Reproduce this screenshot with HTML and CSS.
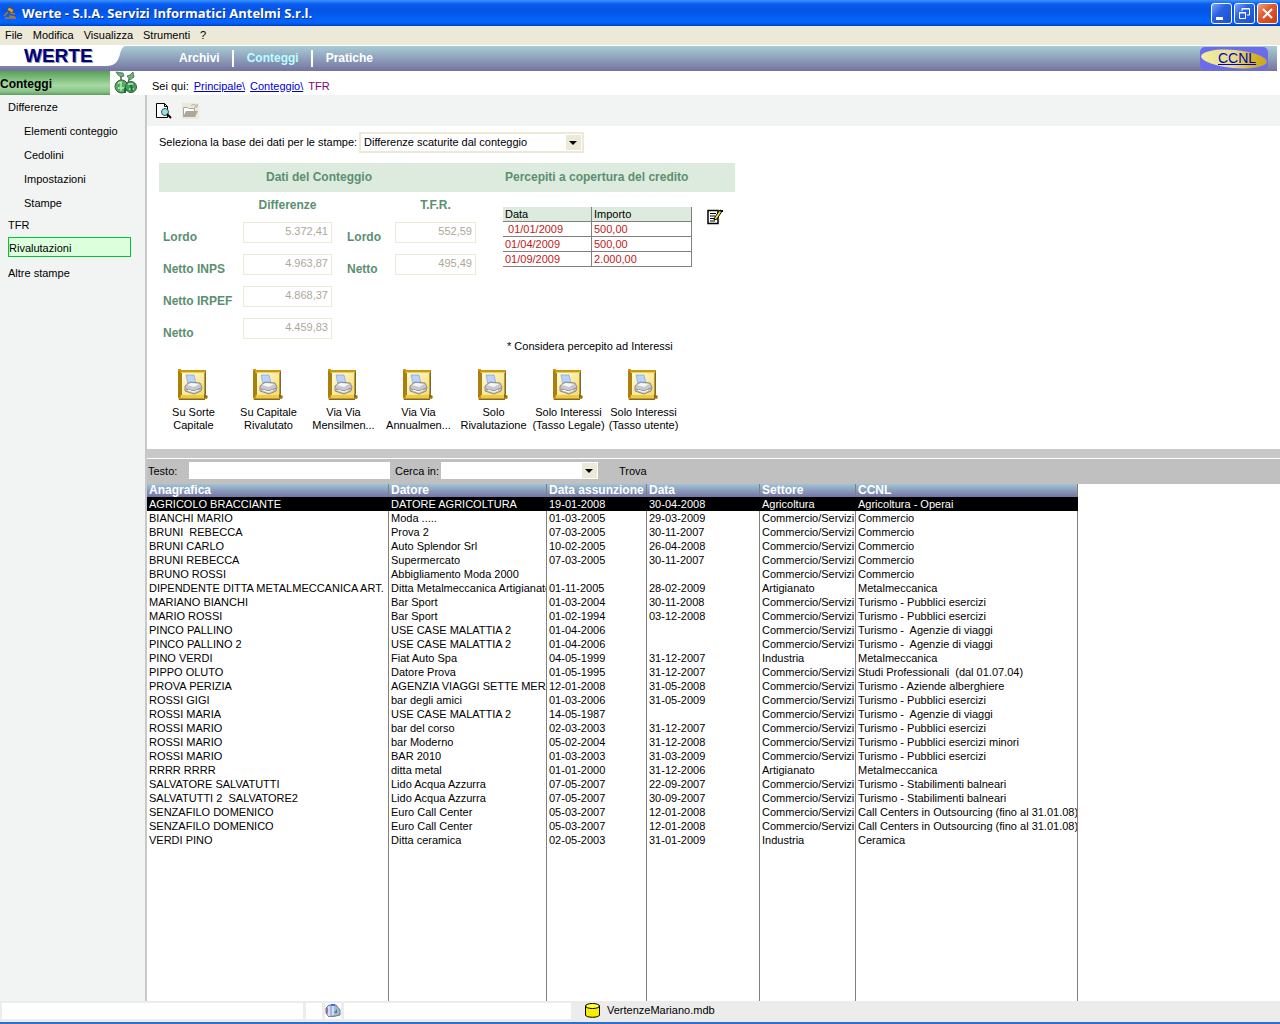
FILE: index.html
```html
<!DOCTYPE html>
<html lang="it">

<head>
  <meta charset="UTF-8">
  <title>Werte - S.I.A. Servizi Informatici Antelmi S.r.l.</title>
  <link rel="stylesheet" href="styles.css">
</head>

<body>
  <svg class="defs" width="0" height="0" aria-hidden="true">
    <linearGradient id="gold" x1="0" y1="0" x2="1" y2="1">
      <stop offset="0" stop-color="#fffbe0" />
      <stop offset="1" stop-color="#f3dc6c" />
    </linearGradient>
    <symbol id="book" viewBox="0 0 31 32">
      <path d="M1 1h27v27h2l-1 2H3l-2-2z" fill="#b98a0e" />
      <path d="M0 0h3v1h24v30H1L0 29z" fill="#c89a14" />
      <path d="M4 4h22v22H4z" fill="url(#gold)" />
      <path d="M1 2v26M3 4v22" stroke="#8d6508" />
      <path d="M3 3.500h24" stroke="#f0cf50" />
      <path d="M27.500 3v22" stroke="#6f6a4c" />
      <path d="M3 26h26l1 1-3 2H3z" fill="#f1c93a" />
      <path d="M26 25l4 2.500-4 2z" fill="#7c6a35" />
      <path d="M1 30.500h26" stroke="#76694a" />
      <path d="M8 6h8l2 9h-8z" fill="#b9d3fb" stroke="#7fa0dc" stroke-width=".7" />
      <path d="M7 17l5-4 10 1 2 4-1 4-7 3-9-3z" fill="#c9c9cd" stroke="#77777d" stroke-width=".8" />
      <path d="M9 16l4-2 8 1-5 3z" fill="#f6f6f8" />
      <path d="M8 20l8 2 7-3" stroke="#8a8a90" fill="none" />
      <path d="M10 21l6 2 4-2" stroke="#fff" fill="none" />
    </symbol>
  </svg>

  <div class="window">
    <header class="title-bar">
      <svg class="app-icon" viewBox="0 0 14 14" width="14" height="14">
        <path d="M6 1l5 3-2 3-5-3z" fill="#d9a33c" stroke="#5a3c10" stroke-width=".7" />
        <path d="M5 6L1 10M7 7l5 1M6 10l6 1M2 12h11" stroke="#b07a28" stroke-width="1.500" />
      </svg>
      <h1>Werte - S.I.A. Servizi Informatici Antelmi S.r.l.</h1>
      <div class="window-buttons">
        <button type="button" aria-label="Riduci a icona">
          <svg viewBox="0 0 21 21"><path d="M5 14h7v3H5z" fill="#fff" /></svg>
        </button>
        <button type="button" aria-label="Ripristina">
          <svg viewBox="0 0 21 21" fill="none" stroke="#fff"><path d="M8 8V5.500h7.500V12H13M8 6h8" /><path d="M5.500 9.500h6v6h-6zM5 10h7" /></svg>
        </button>
        <button type="button" class="close" aria-label="Chiudi">
          <svg viewBox="0 0 21 21"><path d="M6 6l9 9M15 6l-9 9" stroke="#fff" stroke-width="2" /></svg>
        </button>
      </div>
    </header>

    <div class="menu-bar">
      <button type="button">File</button>
      <button type="button">Modifica</button>
      <button type="button">Visualizza</button>
      <button type="button">Strumenti</button>
      <button type="button">?</button>
    </div>

    <nav class="top-nav">
      <svg class="logo-shape" viewBox="0 0 126 20" width="126" height="20">
        <path d="M0 0h125c-3 1-4 4-5 8-2 8-5 12-14 12H0z" fill="#fff" />
      </svg>
      <span class="logo">WERTE</span>
      <div class="sections">
        <a href="#">Archivi</a>
        <a href="#" class="current">Conteggi</a>
        <a href="#">Pratiche</a>
      </div>
      <a href="#" class="ccnl">
        <svg viewBox="0 0 68 23" width="68" height="23">
          <linearGradient id="oval" x1="0" x2="1">
            <stop offset="0" stop-color="#f4eda0" />
            <stop offset=".5" stop-color="#e6dc90" />
            <stop offset=".75" stop-color="#d4b832" />
            <stop offset="1" stop-color="#c9a51c" />
          </linearGradient>
          <rect width="68" height="23" rx="5" fill="#6a6cec" />
          <ellipse cx="34" cy="12" rx="33" ry="9" transform="rotate(5 34 12)" fill="url(#oval)" />
        </svg>
        <span>CCNL</span>
      </a>
    </nav>

    <div class="body">
      <aside class="sidebar">
        <div class="sidebar-head">
          <h2>Conteggi</h2>
          <svg viewBox="0 0 24 24" width="24" height="24">
            <path d="M7 9V4M14 12l2-6 4-1" stroke="#4d6b50" stroke-width="1.500" fill="none" />
            <path d="M2 1l7 1 1 3-3 1-3-2zM13 5l3-1 3-3 1 5-4 3z" fill="#69b577" stroke="#4d6b50" stroke-width=".8" />
            <circle cx="7.500" cy="15.500" r="6.500" fill="#4fae62" stroke="#3d5c42" />
            <circle cx="17" cy="16" r="5.500" fill="#43a25a" stroke="#3d5c42" />
            <path d="M4 12l4-1M4 17h6M7 12v8M14 13h5M15 18h5" stroke="#b8e8bd" stroke-width="1.500" />
            <path d="M11 17v5M17 14l1 6" stroke="#1c6e33" stroke-width="2" />
          </svg>
        </div>
        <ul class="tree">
          <li><a href="#">Differenze</a></li>
          <li class="sub"><a href="#">Elementi conteggio</a></li>
          <li class="sub"><a href="#">Cedolini</a></li>
          <li class="sub"><a href="#">Impostazioni</a></li>
          <li class="sub"><a href="#">Stampe</a></li>
          <li class="tfr"><a href="#">TFR</a></li>
          <li class="selected"><a href="#">Rivalutazioni</a></li>
          <li><a href="#">Altre stampe</a></li>
        </ul>
      </aside>

      <main>
        <div class="breadcrumb">
          <span>Sei qui:</span>
          <a href="#">Principale\</a>
          <a href="#">Conteggio\</a>
          <span class="here">TFR</span>
        </div>

        <div class="panel">
          <div class="toolbar">
            <button type="button" aria-label="Anteprima">
              <svg viewBox="0 0 17 16" width="17" height="16">
                <path d="M1.500.5h8l3 3V14.500h-11z" fill="#fff" stroke="#000" />
                <path d="M9.500.5v3h3" fill="none" stroke="#000" />
                <circle cx="10" cy="9" r="3.500" fill="#8fe3ea" stroke="#3b4a4d" />
                <path d="M12 11l4 4" stroke="#000" stroke-width="2" />
              </svg>
            </button>
            <button type="button" aria-label="Apri" disabled>
              <svg viewBox="0 0 17 16" width="17" height="16">
                <path d="M0 0h17v16H0z" fill="#ece9d8" />
                <path d="M1.500 13.500v-9h4l1 1h6v3" fill="#fff" stroke="#aca899" />
                <path d="M1 14l3-6h12l-3 6z" fill="#aca899" />
                <path d="M9 3c2-2 4-2 5 0M15 1v3h-3" fill="none" stroke="#aca899" />
              </svg>
            </button>
          </div>

          <section class="report">
            <div class="base-select">
              <label for="base">Seleziona la base dei dati per le stampe:</label>
              <div class="combo bordered">
                <select id="base">
                  <option>Differenze scaturite dal conteggio</option>
                </select>
              </div>
            </div>

            <div class="band">
              <h3 class="calc-title">Dati del Conteggio</h3>
              <h3>Percepiti a copertura del credito</h3>
            </div>

            <div class="figures">
              <div class="calc">
                <h4 class="diff-head">Differenze</h4>
                <h4 class="tfr-head">T.F.R.</h4>
                <label for="d1">Lordo</label>
                <input id="d1" value="5.372,41" disabled>
                <label for="t1" class="tfr-label">Lordo</label>
                <input id="t1" value="552,59" disabled>
                <label for="d2">Netto INPS</label>
                <input id="d2" value="4.963,87" disabled>
                <label for="t2" class="tfr-label">Netto</label>
                <input id="t2" value="495,49" disabled>
                <label for="d3" class="first">Netto IRPEF</label>
                <input id="d3" value="4.868,37" disabled>
                <label for="d4" class="first">Netto</label>
                <input id="d4" value="4.459,83" disabled>
              </div>

              <div class="received">
                <table>
                  <thead>
                    <tr><th>Data</th><th>Importo</th></tr>
                  </thead>
                  <tbody>
                    <tr><td> 01/01/2009</td><td>500,00</td></tr>
                    <tr><td>01/04/2009</td><td>500,00</td></tr>
                    <tr><td>01/09/2009</td><td>2.000,00</td></tr>
                  </tbody>
                </table>
                <p>* Considera percepito ad Interessi</p>
              </div>

              <button type="button" class="edit" aria-label="Modifica percepiti">
                <svg viewBox="0 0 16 16" width="16" height="16">
                  <path d="M1 1.500h10v13H1z" fill="#fff" stroke="#000" stroke-width="1.500" />
                  <path d="M3 4.500h6M3 7h5M3 9.500h4M3 12h5" stroke="#000" />
                  <path d="M7 11l1-3 5-7 2 1-5 8z" fill="#f5e63c" stroke="#000" />
                  <path d="M12 1h4v2h-2z" />
                </svg>
              </button>
            </div>

            <div class="prints">
              <button type="button"><svg><use href="#book" /></svg>Su Sorte<br>Capitale</button>
              <button type="button"><svg><use href="#book" /></svg>Su Capitale<br>Rivalutato</button>
              <button type="button"><svg><use href="#book" /></svg>Via Via<br>Mensilmen...</button>
              <button type="button"><svg><use href="#book" /></svg>Via Via<br>Annualmen...</button>
              <button type="button"><svg><use href="#book" /></svg>Solo<br>Rivalutazione</button>
              <button type="button"><svg><use href="#book" /></svg>Solo Interessi<br>(Tasso Legale)</button>
              <button type="button"><svg><use href="#book" /></svg>Solo Interessi<br>(Tasso utente)</button>
            </div>
          </section>

          <div class="splitter"></div>

          <form class="search">
            <label for="testo">Testo:</label>
            <input type="text" id="testo">
            <label for="cerca">Cerca in:</label>
            <div class="combo">
              <select id="cerca">
                <option></option>
              </select>
            </div>
            <button type="button">Trova</button>
          </form>

          <div class="records">
            <table>
              <colgroup>
                <col class="c-anagrafica">
                <col class="c-datore">
                <col class="c-assunzione">
                <col class="c-data">
                <col class="c-settore">
                <col class="c-ccnl">
              </colgroup>
              <thead>
                <tr><th>Anagrafica</th><th>Datore</th><th>Data assunzione</th><th>Data</th><th>Settore</th><th>CCNL</th></tr>
              </thead>
              <tbody>
                <tr class="active"><td>AGRICOLO BRACCIANTE</td><td>DATORE AGRICOLTURA</td><td>19-01-2008</td><td>30-04-2008</td><td>Agricoltura</td><td>Agricoltura - Operai</td></tr>
                <tr><td>BIANCHI MARIO</td><td>Moda .....</td><td>01-03-2005</td><td>29-03-2009</td><td>Commercio/Servizi</td><td>Commercio</td></tr>
                <tr><td>BRUNI  REBECCA</td><td>Prova 2</td><td>07-03-2005</td><td>30-11-2007</td><td>Commercio/Servizi</td><td>Commercio</td></tr>
                <tr><td>BRUNI CARLO</td><td>Auto Splendor Srl</td><td>10-02-2005</td><td>26-04-2008</td><td>Commercio/Servizi</td><td>Commercio</td></tr>
                <tr><td>BRUNI REBECCA</td><td>Supermercato</td><td>07-03-2005</td><td>30-11-2007</td><td>Commercio/Servizi</td><td>Commercio</td></tr>
                <tr><td>BRUNO ROSSI</td><td>Abbigliamento Moda 2000</td><td></td><td></td><td>Commercio/Servizi</td><td>Commercio</td></tr>
                <tr><td>DIPENDENTE DITTA METALMECCANICA ART.</td><td>Ditta Metalmeccanica Artigianato</td><td>01-11-2005</td><td>28-02-2009</td><td>Artigianato</td><td>Metalmeccanica</td></tr>
                <tr><td>MARIANO BIANCHI</td><td>Bar Sport</td><td>01-03-2004</td><td>30-11-2008</td><td>Commercio/Servizi</td><td>Turismo - Pubblici esercizi</td></tr>
                <tr><td>MARIO ROSSI</td><td>Bar Sport</td><td>01-02-1994</td><td>03-12-2008</td><td>Commercio/Servizi</td><td>Turismo - Pubblici esercizi</td></tr>
                <tr><td>PINCO PALLINO</td><td>USE CASE MALATTIA 2</td><td>01-04-2006</td><td></td><td>Commercio/Servizi</td><td>Turismo -  Agenzie di viaggi</td></tr>
                <tr><td>PINCO PALLINO 2</td><td>USE CASE MALATTIA 2</td><td>01-04-2006</td><td></td><td>Commercio/Servizi</td><td>Turismo -  Agenzie di viaggi</td></tr>
                <tr><td>PINO VERDI</td><td>Fiat Auto Spa</td><td>04-05-1999</td><td>31-12-2007</td><td>Industria</td><td>Metalmeccanica</td></tr>
                <tr><td>PIPPO OLUTO</td><td>Datore Prova</td><td>01-05-1995</td><td>31-12-2007</td><td>Commercio/Servizi</td><td>Studi Professionali  (dal 01.07.04)</td></tr>
                <tr><td>PROVA PERIZIA</td><td>AGENZIA VIAGGI SETTE MERA</td><td>12-01-2008</td><td>31-05-2008</td><td>Commercio/Servizi</td><td>Turismo - Aziende alberghiere</td></tr>
                <tr><td>ROSSI GIGI</td><td>bar degli amici</td><td>01-03-2006</td><td>31-05-2009</td><td>Commercio/Servizi</td><td>Turismo - Pubblici esercizi</td></tr>
                <tr><td>ROSSI MARIA</td><td>USE CASE MALATTIA 2</td><td>14-05-1987</td><td></td><td>Commercio/Servizi</td><td>Turismo -  Agenzie di viaggi</td></tr>
                <tr><td>ROSSI MARIO</td><td>bar del corso</td><td>02-03-2003</td><td>31-12-2007</td><td>Commercio/Servizi</td><td>Turismo - Pubblici esercizi</td></tr>
                <tr><td>ROSSI MARIO</td><td>bar Moderno</td><td>05-02-2004</td><td>31-12-2008</td><td>Commercio/Servizi</td><td>Turismo - Pubblici esercizi minori</td></tr>
                <tr><td>ROSSI MARIO</td><td>BAR 2010</td><td>01-03-2003</td><td>31-03-2009</td><td>Commercio/Servizi</td><td>Turismo - Pubblici esercizi</td></tr>
                <tr><td>RRRR RRRR</td><td>ditta metal</td><td>01-01-2000</td><td>31-12-2006</td><td>Artigianato</td><td>Metalmeccanica</td></tr>
                <tr><td>SALVATORE SALVATUTTI</td><td>Lido Acqua Azzurra</td><td>07-05-2007</td><td>22-09-2007</td><td>Commercio/Servizi</td><td>Turismo - Stabilimenti balneari</td></tr>
                <tr><td>SALVATUTTI 2  SALVATORE2</td><td>Lido Acqua Azzurra</td><td>07-05-2007</td><td>30-09-2007</td><td>Commercio/Servizi</td><td>Turismo - Stabilimenti balneari</td></tr>
                <tr><td>SENZAFILO DOMENICO</td><td>Euro Call Center</td><td>05-03-2007</td><td>12-01-2008</td><td>Commercio/Servizi</td><td>Call Centers in Outsourcing (fino al 31.01.08)</td></tr>
                <tr><td>SENZAFILO DOMENICO</td><td>Euro Call Center</td><td>05-03-2007</td><td>12-01-2008</td><td>Commercio/Servizi</td><td>Call Centers in Outsourcing (fino al 31.01.08)</td></tr>
                <tr><td>VERDI PINO</td><td>Ditta ceramica</td><td>02-05-2003</td><td>31-01-2009</td><td>Industria</td><td>Ceramica</td></tr>
                <tr class="filler"><td></td><td></td><td></td><td></td><td></td><td></td></tr>
              </tbody>
            </table>
          </div>
        </div>
      </main>
    </div>

    <footer class="status-bar">
      <div class="cell wide"></div>
      <div class="cell small"></div>
      <div class="cell small">
        <svg viewBox="0 0 16 13" width="16" height="13">
          <path d="M4 1h7l4 5v5l-4 1-7 1-3-4V4z" fill="#a9b4dc" stroke="#6f7693" />
          <path d="M4 2v10M8 2v9" stroke="#dfe6ff" stroke-width="1.500" />
          <path d="M2 4v5" stroke="#a33a5c" />
          <path d="M6 1h4" stroke="#2f78e0" stroke-width="2" />
          <path d="M9 9l3-4v4z" fill="#2f9c3c" />
        </svg>
      </div>
      <div class="cell medium"></div>
      <div class="database">
        <svg viewBox="0 0 15 15" width="15" height="15">
          <path d="M.5 3v9c0 3 14 3 14 0V3z" fill="#f5ee00" stroke="#000" />
          <ellipse cx="7.500" cy="3" rx="7" ry="2.500" fill="#ffff4a" stroke="#000" />
        </svg>
        <span>VertenzeMariano.mdb</span>
      </div>
    </footer>
  </div>
</body>

</html>
```
FILE: styles.css
```css
* {
  box-sizing: border-box;
}

body {
  margin: 0;
  background-color: #fff;
  color: #000;
  font-family: "Liberation Sans", Arial, sans-serif;
  font-size: 11px;
  line-height: 14px;
}

h1, h2, h3, h4, p, ul {
  margin: 0;
  padding: 0;
}

button, input, select {
  margin: 0;
  padding: 0;
  border: none;
  background: none;
  color: inherit;
  font: inherit;
}

svg {
  display: block;
}

.defs {
  position: absolute;
}

.window {
  display: flex;
  flex-direction: column;
  min-height: 100vh;
  border-bottom: 2px solid #2f6fd0;
}

/* title bar */
.title-bar {
  display: flex;
  align-items: center;
  height: 26px;
  padding: 0 2px 0 3px;
  background: linear-gradient(#3c95ff 0, #0a5cf0 4px, #0453e4 10px, #0464fb 20px, #0262fa 23px, #0040c0 26px);
}

.title-bar h1 {
  flex: 1;
  margin-left: 5px;
  color: #fff;
  font-family: "Open Sans", sans-serif;
  font-size: 13px;
  font-weight: bold;
  text-shadow: 1px 1px 0 #0a2f90;
}

.window-buttons {
  display: flex;
  gap: 2px;
}

.window-buttons button {
  width: 21px;
  height: 21px;
  overflow: hidden;
  border: 1px solid #fff;
  border-radius: 3px;
  background: linear-gradient(135deg, #7fa5f5, #2a62e4 40%, #1d50d0);
}

.window-buttons .close {
  background: linear-gradient(135deg, #f0a080, #e25a32 40%, #c83c14);
}

.window-buttons svg {
  margin: -1px;
  width: 21px;
  height: 21px;
}

/* menu */
.menu-bar {
  display: flex;
  gap: 10px;
  height: 20px;
  padding: 0 5px 2px;
  border-bottom: 1px solid #fff;
  background-color: #ece9d8;
}

/* navigation */
.top-nav {
  position: relative;
  display: flex;
  align-items: center;
  height: 25px;
  margin-right: 3px;
  background: linear-gradient(#a8ccd6, #7474a0);
}

.logo-shape {
  position: absolute;
  top: 0;
  left: 0;
}

.logo {
  position: relative;
  width: 179px;
  padding: 0 0 6px 24px;
  color: #000080;
  font-size: 19px;
  font-weight: bold;
  line-height: 20px;
  text-shadow: 1px 1px 0 #999;
}

.sections {
  display: flex;
  flex: 1;
}

.sections a {
  color: #fff;
  font-size: 12px;
  font-weight: bold;
  line-height: 17px;
  text-decoration: none;
}

.sections a + a {
  margin-left: 12px;
  padding-left: 13px;
  border-left: 2px solid #fff;
}

.sections .current {
  color: #b8ffff;
}

.ccnl {
  position: relative;
  margin-right: 9px;
  color: #0000c0;
  font-size: 14px;
}

.ccnl span {
  position: absolute;
  top: 4px;
  left: 18px;
  text-decoration: underline;
}

/* sidebar */
.body {
  display: flex;
  flex: 1;
}

.sidebar {
  display: flex;
  flex-direction: column;
  width: 145px;
}

.sidebar-head {
  display: flex;
  gap: 4px;
  height: 24px;
}

.sidebar-head h2 {
  width: 110px;
  background: linear-gradient(#57a057, #a5d9a2 60%, #8cc58a 85%, #5f9e5f);
  font-size: 12px;
  line-height: 26px;
}

.tree {
  flex: 1;
  padding: 5px 8px;
  background-color: #f2f4f3;
  list-style: none;
}

.tree a {
  color: #000;
  text-decoration: none;
}

.tree li {
  height: 24px;
}

.tree .sub {
  padding-left: 16px;
}

.tree .tfr {
  margin-top: -2px;
  height: 19px;
}

.tree .selected {
  width: 123px;
  height: 20px;
  margin-bottom: 9px;
  border: 1px solid #00c832;
  background-color: #dcffdc;
  line-height: 20px;
}

/* main area */
main {
  display: flex;
  flex: 1;
  flex-direction: column;
  min-width: 0;
}

.breadcrumb {
  display: flex;
  gap: 5px;
  height: 24px;
  padding-left: 7px;
  line-height: 31px;
}

.breadcrumb a {
  color: #0000d0;
}

.breadcrumb .here {
  color: #800080;
}

.panel {
  display: flex;
  flex: 1;
  flex-direction: column;
  border-left: 2px solid #c8c8c8;
}

.toolbar {
  display: flex;
  align-items: center;
  gap: 10px;
  height: 31px;
  padding-left: 8px;
  background-color: #f2f4f3;
}

.report {
  height: 323px;
  padding: 6px 12px 0;
}

.base-select {
  display: flex;
  align-items: center;
}

.base-select label {
  width: 200px;
  padding-bottom: 1px;
}

.combo {
  position: relative;
  width: 157px;
  height: 17px;
  background-color: #fff;
}

.combo::after {
  content: "";
  position: absolute;
  top: 1px;
  right: 1px;
  width: 15px;
  height: 15px;
  background: #ece9d8;
  pointer-events: none;
}

.combo::before {
  content: "";
  position: absolute;
  z-index: 1;
  top: 7px;
  right: 5px;
  border: 4px solid transparent;
  border-top-color: #000;
  border-bottom: none;
  pointer-events: none;
}

.combo select {
  width: 100%;
  height: 100%;
  padding: 0 0 2px 3px;
  appearance: none;
}

.combo.bordered {
  width: 225px;
  height: 21px;
  border: 2px solid #ece9d8;
}

.band {
  display: flex;
  width: 576px;
  height: 29px;
  margin-top: 10px;
  background-color: #ddebde;
}

.band h3, .figures h4, .calc label {
  color: #5a9070;
  font-size: 12px;
  font-weight: bold;
  line-height: 29px;
}

.band .calc-title {
  width: 320px;
  margin-right: 26px;
  text-align: center;
}

.figures {
  display: flex;
  align-items: flex-start;
}

.calc {
  display: grid;
  grid-template-columns: 80px 89px 63px 81px;
  grid-template-rows: 19px;
  grid-auto-rows: 21px;
  row-gap: 11px;
  width: 344px;
  padding: 0 4px;
}

.calc h4 {
  line-height: 27px;
  text-align: center;
}

.calc label {
  line-height: 31px;
}

.calc .diff-head {
  grid-column: 2;
}

.calc .tfr-head {
  grid-column: 4;
}

.calc .first {
  grid-column: 1;
}

.calc .tfr-label {
  padding-left: 15px;
}

.calc input {
  width: 100%;
  padding: 0 3px 3px;
  border: 1px solid #ece9d8;
  background-color: #fff;
  color: #aca899;
  text-align: right;
}

.received {
  width: 189px;
  margin-top: 15px;
}

.received table {
  width: 100%;
  border-spacing: 0;
  table-layout: fixed;
}

.received th, .received td {
  height: 15px;
  padding: 0 2px;
  border-right: 1px solid #808080;
  border-bottom: 1px solid #808080;
  font-weight: normal;
  text-align: left;
  white-space: pre;
}

.received th:first-child {
  width: 89px;
}

.received th {
  background-color: #ddebde;
}

.received td {
  color: #c02020;
}

.received p {
  margin: 72px 0 0 4px;
}

.edit {
  margin: 17px 0 0 15px;
}

.prints {
  display: flex;
  margin: 16px 0 0 -3px;
}

.prints button {
  width: 75px;
  line-height: 13px;
  text-align: center;
  white-space: nowrap;
}

.prints svg {
  width: 31px;
  height: 32px;
  margin: 0 auto 5px;
}

.splitter {
  height: 10px;
  border-bottom: 1px solid #fff;
  background-color: #c8c8c8;
}

/* search */
.search {
  display: flex;
  align-items: center;
  height: 25px;
  padding-bottom: 2px;
  background-color: #c0c0c0;
}

.search label {
  padding-left: 1px;
}

.search label:first-child {
  width: 42px;
}

.search input {
  width: 201px;
  height: 17px;
  margin-right: 4px;
  padding: 0 3px;
  background-color: #fff;
}

.search .combo {
  margin: 0 21px 0 2px;
}

/* records */
.records {
  display: flex;
  flex: 1;
}

.records table {
  width: 931px;
  border-spacing: 0;
  table-layout: fixed;
}

.c-anagrafica {
  width: 242px;
}

.c-datore {
  width: 158px;
}

.c-assunzione {
  width: 100px;
}

.c-data {
  width: 113px;
}

.c-settore {
  width: 96px;
}

.c-ccnl {
  width: 222px;
}

.records th, .records td {
  height: 14px;
  padding: 0 0 0 2px;
  border-right: 1px solid #808080;
  overflow: hidden;
  text-align: left;
  white-space: pre;
}

.records th {
  height: 13px;
  background: linear-gradient(#a0c4d4, #7474a4);
  color: #fff;
  font-size: 12px;
  line-height: 13px;
}

.records .active td {
  border-right-color: #000;
  background-color: #000;
  color: #fff;
}

.records .filler td {
  height: auto;
}

/* status bar */
.status-bar {
  display: flex;
  align-items: flex-start;
  gap: 3px;
  height: 21px;
  padding: 2px;
  background-color: #ececec;
}

.cell {
  height: 16px;
  background-color: #fff;
}

.cell.wide {
  width: 301px;
}

.cell.small {
  width: 16px;
  padding-top: 1px;
}

.cell.medium {
  width: 227px;
}

.database {
  display: flex;
  gap: 7px;
  margin-left: 11px;
}
```
